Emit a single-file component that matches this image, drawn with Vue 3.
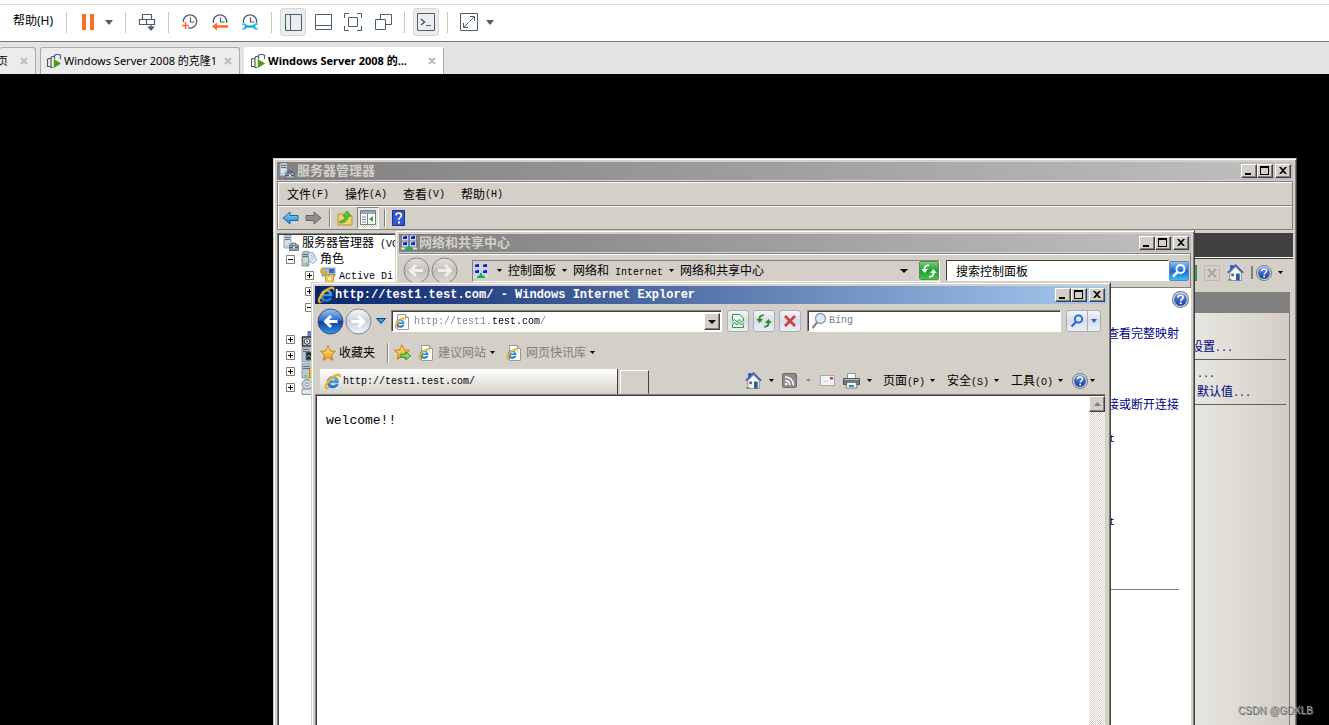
<script setup>
import { ref } from 'vue'

const address = ref('http://test1.test.com/')
const query = ref('')
const panelQuery = ref('搜索控制面板')

const managerMenus = [
  { text: '文件', key: '(F)' },
  { text: '操作', key: '(A)' },
  { text: '查看', key: '(V)' },
  { text: '帮助', key: '(H)' }
]

const pageMenus = [
  { text: '页面', key: '(P)' },
  { text: '安全', key: '(S)' },
  { text: '工具', key: '(O)' }
]

const tree = [
  { level: 0, icon: 'i-server', text: '服务器管理器', latin: ' (VC' },
  { level: 1, box: '-', icon: 'i-roles', text: '角色' },
  { level: 2, box: '+', icon: 'i-ad', latin: 'Active Di' },
  { level: 2, box: '+' },
  { level: 2, box: '-' },
  { level: 2 },
  { level: 1, box: '+', icon: 'i-feature' },
  { level: 1, box: '+', icon: 'i-diag' },
  { level: 1, box: '+', icon: 'i-config' },
  { level: 1, box: '+', icon: 'i-disk' }
]
</script>

<template>
  <div class="page">
    <svg class="defs" width="0" height="0" aria-hidden="true">
      <defs>
        <linearGradient id="gBlue" x1="0" y1="0" x2="0" y2="1">
          <stop offset="0" stop-color="#9cc4ee" /><stop offset=".45" stop-color="#2f6fd0" /><stop offset=".5" stop-color="#0a3f9c" /><stop offset="1" stop-color="#2f9af0" />
        </linearGradient>
        <linearGradient id="gPale" x1="0" y1="0" x2="0" y2="1">
          <stop offset="0" stop-color="#f6f8fb" /><stop offset=".5" stop-color="#c9d0da" /><stop offset="1" stop-color="#f4f7fb" />
        </linearGradient>
        <linearGradient id="gGray" x1="0" y1="0" x2="0" y2="1">
          <stop offset="0" stop-color="#e4e2de" /><stop offset=".5" stop-color="#c2c0bb" /><stop offset="1" stop-color="#dddbd6" />
        </linearGradient>
        <linearGradient id="gGold" x1="0" y1="0" x2="0" y2="1">
          <stop offset="0" stop-color="#ffe98a" /><stop offset="1" stop-color="#f59a10" />
        </linearGradient>
        <linearGradient id="gArrow" x1="0" y1="0" x2="0" y2="1">
          <stop offset="0" stop-color="#8ed4fb" /><stop offset="1" stop-color="#1488d8" />
        </linearGradient>
        <linearGradient id="gHelp" x1="0" y1="0" x2="0" y2="1">
          <stop offset="0" stop-color="#6f95e6" /><stop offset="1" stop-color="#123a9e" />
        </linearGradient>
        <linearGradient id="gIe" x1="0" y1="0" x2="0" y2="1">
          <stop offset="0" stop-color="#5cc0f8" /><stop offset="1" stop-color="#1573d0" />
        </linearGradient>
      </defs>
      <symbol id="i-ie" viewBox="0 0 16 16">
        <path d="M13.6 9.2H5.6c.2 1.700 1.300 2.600 2.900 2.600 1.200 0 2-.5 2.500-1.300h2.400c-.7 2.300-2.600 3.600-5 3.600-3.300 0-5.500-2.300-5.500-5.500S5.200 3.100 8.400 3.100c3.300 0 5.400 2.500 5.200 6.100zM5.700 7.200h5.200C10.700 5.900 9.700 5.100 8.300 5.100S6 5.900 5.700 7.200z" fill="url(#gIe)" stroke="#1460b0" stroke-width=".4" />
        <path d="M1.500 14.800C-.6 12.600 3 6.200 7.600 3 11 .6 14.500 0 15.300 1.600c.4.800.1 2-.5 3.200.1-1.600-.4-2.400-1.600-2.300-2 .1-5.300 2.200-7.700 5.300C3 11 1.900 13.600 3.200 14.100c.7.200 1.700-.1 2.700-.7-1.700 1.500-3.500 2.300-4.400 1.400z" fill="#fbb916" stroke="#c98508" stroke-width=".3" />
      </symbol>
      <symbol id="i-page" viewBox="0 0 16 16">
        <path d="M3.500.5h8l3 3v12h-11z" fill="#fff" stroke="#9a9a9a" />
        <path d="M11.500.5v3h3" fill="#e4e4e4" stroke="#9a9a9a" />
        <use href="#i-ie" x="0" y="3" width="12" height="12" />
      </symbol>
      <symbol id="i-star" viewBox="0 0 16 16">
        <path d="M8 .8l2.200 5 5.300.6-4 3.600 1.200 5.300L8 12.600l-4.700 2.700L4.500 10 .5 6.400l5.300-.6z" fill="url(#gGold)" stroke="#b97812" stroke-width=".9" stroke-linejoin="round" />
      </symbol>
      <symbol id="i-staradd" viewBox="0 0 16 16">
        <use href="#i-star" width="15" height="15" />
        <path d="M6.500 9.500h4.500V7.200L15.700 11 11 14.800v-2.300H6.500z" fill="#7fe35c" stroke="#2a8a1c" stroke-width=".9" />
      </symbol>
      <symbol id="i-help" viewBox="0 0 16 16">
        <circle cx="8" cy="8" r="7.500" fill="#dcdce2" stroke="#73777f" />
        <circle cx="8" cy="8" r="6" fill="url(#gHelp)" />
        <path d="M5.600 6.300C5.600 4.600 6.700 4 8 4s2.500.7 2.500 2.100C10.500 7.600 8.200 7.900 8.200 9.600" fill="none" stroke="#fff" stroke-width="1.500" />
        <rect x="7.300" y="10.700" width="1.800" height="1.700" fill="#fff" />
      </symbol>
      <symbol id="i-home" viewBox="0 0 16 16">
        <path d="M3 1h3v4H3z" fill="#2a4fd0" />
        <path d="M2.500 8L8 2.500 13.500 8v7.500h-11z" fill="#f4f6fa" stroke="#8c98ac" />
        <path d="M.7 8.200L8 1l7.300 7.200" fill="none" stroke="#3e5fae" stroke-width="1.500" />
        <path d="M8.500 9h3.500v6.500H8.500z" fill="#2d5c9c" />
        <path d="M4 9h2.500v2.500H4z" fill="#5b6472" />
        <path d="M1 14.500c2-1 3-.5 4 1H1z" fill="#66a34a" />
      </symbol>
      <symbol id="i-net" viewBox="0 0 16 16">
        <path d="M1 .5h6v5H1zM9 .5h6v5H9zM1 6.500h6v5H1zM9 6.500h6v5H9z" fill="#c9d6f4" />
        <path d="M2 1h4v3H2zM10 1h4v3h-4zM2 7h4v3H2zM10 7h4v3h-4z" fill="#1622c0" />
        <path d="M2 1h2v1H2zM10 1h2v1h-2zM2 7h2v1H2zM10 7h2v1h-2z" fill="#5f7cf0" />
        <path d="M0 13.500h4.500M11.500 13.500H16" stroke="#cdeadb" stroke-width="2" />
        <path d="M7 10h2v2l3 1.500V15H4v-1.500L7 12z" fill="#18b060" />
      </symbol>
      <symbol id="i-server" viewBox="0 0 16 16">
        <path d="M1 1l1.500-1H8v13H1z" fill="#c9d5de" stroke="#8d9ba6" stroke-width=".8" />
        <path d="M2 2.500h5M2 4.500h5" stroke="#60727f" />
        <path d="M2 6.500h5M2 8.500h3" stroke="#eef3f6" />
        <path d="M6.500 10h9v5.500h-9z" fill="#8fa1b0" stroke="#5a6b79" stroke-width=".8" />
        <path d="M9 10V8.200h4V10M6.500 12.500h9" fill="none" stroke="#4d5e6b" />
        <path d="M10 12h2v1.500h-2z" fill="#e8edf0" />
      </symbol>
      <symbol id="i-roles" viewBox="0 0 16 16">
        <path d="M1 2l1.500-1.500H8V15H1z" fill="#b6c4d0" stroke="#7c8b97" stroke-width=".8" />
        <path d="M2 3.500h5M2 5.500h5" stroke="#5a6c7a" />
        <path d="M2 8h5M2 10h5" stroke="#e2eaf0" />
        <path d="M5 13.500h2" stroke="#52d93c" stroke-width="2" />
        <path d="M7 3l4-2 1.500 1.200L15.700 9 12 12.500 8 10z" fill="#e2effa" stroke="#6a93b4" stroke-width=".8" />
        <path d="M9 5l3-1.500M9.500 7L13 5M10 9l3.500-2" stroke="#8db4d4" stroke-width=".8" />
      </symbol>
      <symbol id="i-ad" viewBox="0 0 16 16">
        <path d="M2 1h13v8H2z" fill="#9fc1ee" stroke="#6c86ae" stroke-width=".8" />
        <path d="M9 2h5v4H9z" fill="#3c66c6" />
        <path d="M5 7.500h9L13 16H6z" fill="#ecc956" stroke="#b3851a" stroke-width=".8" />
        <circle cx="3.500" cy="4" r="2.500" fill="none" stroke="#d9a526" stroke-width="1.500" />
        <path d="M5 5.500l4 3.500" stroke="#d9a526" stroke-width="1.500" />
        <path d="M8 10h3v3H8z" fill="#fff2b8" />
      </symbol>
      <symbol id="i-feature" viewBox="0 0 16 16">
        <path d="M7 0h9v9H7z" fill="#6f80c8" stroke="#687886" />
        <path d="M1.500 6h9v9h-9z" fill="#c9ced2" stroke="#2c3136" stroke-width="1.500" />
        <circle cx="6" cy="10.500" r="2.800" fill="#fff" stroke="#2c3136" /><circle cx="6" cy="10.500" r="1" fill="#2c3136" />
      </symbol>
      <symbol id="i-diag" viewBox="0 0 16 16">
        <path d="M1 0h8v15H1z" fill="#b7c7d4" stroke="#8d9ba6" />
        <path d="M2 2.500h6M2 4.500h6" stroke="#5a6c7a" />
        <path d="M5 5h10v8H5z" fill="#22282c" stroke="#69757d" />
        <path d="M6 10l2-2 2 3 2-4" fill="none" stroke="#4edc4e" />
      </symbol>
      <symbol id="i-config" viewBox="0 0 16 16">
        <path d="M1 0h8v15H1z" fill="#b7c7d4" stroke="#8d9ba6" />
        <path d="M2 3.500h6M2 5.500h6" stroke="#5a6c7a" />
        <path d="M3 13h3" stroke="#52d93c" stroke-width="1.500" />
        <path d="M8.500 5h6v10h-6z" fill="#f8c23c" stroke="#b7811a" />
      </symbol>
      <symbol id="i-disk" viewBox="0 0 16 16">
        <circle cx="6" cy="5.500" r="5" fill="#cbd2d8" stroke="#7a858e" />
        <circle cx="6" cy="5.500" r="1.500" fill="#fff" stroke="#8792a0" />
        <path d="M1 10h14v5.500H1z" fill="#e1e4e8" stroke="#84909a" />
      </symbol>
      <symbol id="i-vm" viewBox="0 0 16 16">
        <path d="M5 13.500H1.500v-7l1-1h2M7.500 14.500H5v-10l1-1h2M8.500 9.500V2.500l1-1h4l1 1V6" fill="none" stroke="#4a5f70" stroke-width="1.200" />
        <path d="M7.500 5.500l8 5-8 5z" fill="#4c9a10" stroke="#fff" stroke-width=".5" />
      </symbol>
      <symbol id="i-clock" viewBox="0 0 18 18">
        <circle cx="9" cy="8.500" r="6.700" fill="none" stroke="#4a6274" stroke-width="1.300" />
        <path d="M9.500 4.500V9h4" fill="none" stroke="#4a6274" stroke-width="1.200" />
      </symbol>
      <symbol id="i-min" viewBox="0 0 12 10"><path d="M2 7h6v2H2z" /></symbol>
      <symbol id="i-max" viewBox="0 0 12 10"><path d="M1 0h9v9H1zM2 2v6h7V2z" fill-rule="evenodd" /></symbol>
      <symbol id="i-close" viewBox="0 0 12 10"><path d="M2 1h2l2 2 2-2h2L7 4.500 10 8H8L6 6 4 8H2l3-3.500z" /></symbol>
      <symbol id="i-sync" viewBox="0 0 16 16">
        <path d="M8 3C5.500 3 4.500 4 4.500 6H7L3.600 10 .3 6h2.200C2.500 2.800 5 1.200 8 1.600zM8 13c2.500 0 3.500-1 3.500-3H9l3.400-4 3.300 4h-2.200c0 3.200-2.500 4.800-5.500 4.400z" />
      </symbol>
    </svg>

    <header>
      <div class="strip"></div>
      <div class="toolbar">
        <button class="help">帮助(H)</button>
        <i class="sep"></i>
        <button class="tool" aria-label="pause"><svg width="14" height="16"><path d="M1 0h4v16H1zM9 0h4v16H9z" fill="#ff6a1f" /></svg></button>
        <button class="drop" aria-label="power options"><svg width="8" height="5"><path d="M0 0h8L4 5z" fill="#4a5f70" /></svg></button>
        <i class="sep wide"></i>
        <button class="tool" aria-label="send keys"><svg width="18" height="18" fill="none" stroke="#4a5f70" stroke-width="1.200"><path d="M4.500 1.500h9v5h-9zM1.500 6.500h7v5h-7zM8.500 6.500h8v5h-8zM13 12v4" /><path d="M10.500 14h5L13 17z" fill="#4a5f70" /></svg></button>
        <i class="sep"></i>
        <button class="tool" aria-label="take snapshot"><svg width="18" height="18"><use href="#i-clock" width="18" height="18" /><path d="M0 9h7v8H0z" fill="#fff" /><path d="M1 12.500h7M4.500 9v7" stroke="#ff6a1f" stroke-width="1.500" /></svg></button>
        <button class="tool" aria-label="revert snapshot"><svg width="18" height="18"><use href="#i-clock" width="18" height="18" /><path d="M0 10h18v8H0z" fill="#fff" /><path d="M1 13.500l5-4v2.700h11v2.600H6v2.700z" fill="#ff6a1f" /></svg></button>
        <button class="tool" aria-label="manage snapshots"><svg width="18" height="18"><use href="#i-clock" width="18" height="18" /><path d="M0 10h18v8H0z" fill="#fff" /><path d="M1 10.500h3l2 1.700h6l2-1.700h3v1.200h-2.500v3.600H17v1.200h-3l-2-1.700H6l-2 1.700H1v-1.200h2.500v-3.600H1z" fill="#12b2dc" /></svg></button>
        <i class="sep"></i>
        <button class="tool on" aria-label="library"><svg class="line" width="17" height="17"><path d="M.5.500h16v16H.5zM5.500.500v16" /></svg></button>
        <button class="tool" aria-label="thumbnails"><svg class="line" width="17" height="17"><path d="M.5.500h16v15H.5zM.5 11.500h16" /></svg></button>
        <button class="tool" aria-label="full screen"><svg class="line" width="18" height="18"><path d="M.5 5V.5H5M13 .5h4.500V5M17.500 13v4.500H13M5 17.500H.5V13M4.500 4.500h9v9h-9z" /></svg></button>
        <button class="tool" aria-label="unity"><svg class="line" width="17" height="17"><path d="M.5 5.500h10v10H.5zM5.500 5V.5h11v10H11" /></svg></button>
        <i class="sep"></i>
        <button class="tool on" aria-label="console"><svg width="18" height="18" fill="none" stroke="#4a5f70"><path d="M.5.500h17v17H.5z" /><path d="M4 6l3.500 3L4 12" stroke-width="1.600" /><path d="M9 12.500h5" /></svg></button>
        <i class="sep"></i>
        <button class="tool" aria-label="stretch"><svg width="18" height="18" fill="none" stroke="#4a5f70"><path d="M.5.500h17v17H.5zM10 3.500h4.500V8M8 14.500H3.500V10M14 4l-4.500 4.500M4 14l4.500-4.500" /></svg></button>
        <button class="drop" aria-label="stretch options"><svg width="8" height="5"><path d="M0 0h8L4 5z" fill="#4a5f70" /></svg></button>
      </div>
      <nav class="tabs">
        <div class="tab first"><span>页</span><button aria-label="close"><svg width="8" height="8"><path d="M1 1l6 6M7 1L1 7" /></svg></button></div>
        <div class="tab"><svg width="16" height="16"><use href="#i-vm" /></svg><span>Windows Server 2008 的克隆1</span><button aria-label="close"><svg width="8" height="8"><path d="M1 1l6 6M7 1L1 7" /></svg></button></div>
        <div class="tab current"><svg width="16" height="16"><use href="#i-vm" /></svg><span>Windows Server 2008 的...</span><button aria-label="close"><svg width="8" height="8"><path d="M1 1l6 6M7 1L1 7" /></svg></button></div>
      </nav>
    </header>

    <main class="desktop">
      <section class="win manager">
        <div class="title inactive">
          <svg width="16" height="16"><use href="#i-server" /></svg><h2>服务器管理器</h2>
          <div class="controls">
            <button aria-label="minimize"><svg width="12" height="10"><use href="#i-min" /></svg></button>
            <button aria-label="maximize"><svg width="12" height="10"><use href="#i-max" /></svg></button>
            <button aria-label="close"><svg width="12" height="10"><use href="#i-close" /></svg></button>
          </div>
        </div>
        <div class="band menus">
          <button v-for="m in managerMenus" :key="m.text">{{ m.text }}<span class="lat">{{ m.key }}</span></button>
        </div>
        <div class="band tools">
          <button aria-label="back"><svg width="17" height="14"><path d="M1 7l7-6v3.500h8v5H8V13z" fill="url(#gArrow)" stroke="#1b6aa6" /></svg></button>
          <button aria-label="forward"><svg width="17" height="14"><path d="M16 7L9 1v3.500H1v5h8V13z" fill="#8f8f8f" stroke="#666" /></svg></button>
          <i></i>
          <button aria-label="up"><svg width="16" height="16"><path d="M1 4h5l1 2h8v9H1z" fill="#f3cf6d" stroke="#bb9234" /><path d="M3 11c3 0 5-2 5-5H6l4-5 4 5h-3c0 5-4 7-8 7z" fill="#4fce34" stroke="#2b8c1c" stroke-width=".7" /></svg></button>
          <button class="pressed" aria-label="show tree"><svg width="16" height="15"><path d="M.5.500h15v14H.5z" fill="#fff" stroke="#77808a" /><path d="M1 1h14v3H1z" fill="#9aa6b3" /><path d="M7.500 4v10M2 7h4M2 9.500h4M2 12h4" stroke="#77808a" /><path d="M13 6v6L9 9z" fill="#32b13a" /></svg></button>
          <i></i>
          <button aria-label="help"><svg width="13" height="16"><path d="M.5.500h12v15H.5z" fill="#3459c8" stroke="#1d3588" /><path d="M4 5.500C4 3.500 5 3 6.600 3S9.300 4 9.300 5.500C9.300 7.500 6.800 7.500 6.800 10" fill="none" stroke="#fff" stroke-width="1.600" /><path d="M6 11.500h2v2H6z" fill="#fff" /></svg></button>
        </div>
        <div class="manager-body">
          <ul class="tree">
            <li v-for="(n, i) in tree" :key="i" :class="'lv' + n.level">
              <svg v-if="n.box" class="box" width="9" height="9"><path class="frame" d="M.5.500h8v8h-8z" /><path d="M2 4.500h5" /><path v-if="n.box === '+'" d="M4.500 2v5" /></svg>
              <svg v-if="n.icon" width="16" height="16"><use :href="'#' + n.icon" /></svg>
              <span v-if="n.text || n.latin">{{ n.text }}<span v-if="n.latin" class="lat">{{ n.latin }}</span></span>
            </li>
          </ul>
          <div class="detail">
            <div class="detail-head"></div>
            <div class="detail-tools">
              <button class="go" aria-label="refresh"></button>
              <button class="stop" aria-label="stop"><svg width="10" height="10"><path d="M1 1l8 8M9 1L1 9" stroke="#a6a5a1" stroke-width="2" /></svg></button>
              <button aria-label="home"><svg width="17" height="17"><use href="#i-home" /></svg></button>
              <i></i>
              <button aria-label="help"><svg width="16" height="16"><use href="#i-help" /></svg></button>
              <svg width="5" height="3"><path d="M0 0h5L2.500 3z" /></svg>
            </div>
            <div class="detail-bar"></div>
            <div class="detail-panel">
              <div class="links">
                <div class="group"><a href="#">设置<span class="lat">...</span></a></div>
                <div class="group pair">
                  <a href="#"><span class="lat">...</span></a>
                  <a href="#">默认值<span class="lat">...</span></a>
                </div>
              </div>
            </div>
          </div>
        </div>
      </section>

      <section class="win network">
        <div class="title inactive">
          <svg width="16" height="16"><use href="#i-net" /></svg><h2>网络和共享中心</h2>
          <div class="controls">
            <button aria-label="minimize"><svg width="12" height="10"><use href="#i-min" /></svg></button>
            <button aria-label="maximize"><svg width="12" height="10"><use href="#i-max" /></svg></button>
            <button aria-label="close"><svg width="12" height="10"><use href="#i-close" /></svg></button>
          </div>
        </div>
        <div class="net-nav">
          <div class="rounds">
            <button aria-label="back"><svg width="27" height="27"><circle cx="13.500" cy="13.500" r="12.500" fill="url(#gGray)" stroke="#85837e" /><path d="M20 13.500H8M13 8l-5.500 5.500L13 19" fill="none" stroke="#efeeeb" stroke-width="3" /></svg></button>
            <button aria-label="forward"><svg width="27" height="27"><circle cx="13.500" cy="13.500" r="12.500" fill="url(#gGray)" stroke="#85837e" /><path d="M7 13.500h12M14 8l5.500 5.500L14 19" fill="none" stroke="#efeeeb" stroke-width="3" /></svg></button>
          </div>
          <div class="crumbs">
            <svg width="16" height="16"><use href="#i-net" /></svg>
            <svg class="c" width="5" height="3"><path d="M0 0h5L2.500 3z" /></svg>
            <a href="#">控制面板</a>
            <svg class="c" width="5" height="3"><path d="M0 0h5L2.500 3z" /></svg>
            <a href="#">网络和<span class="lat"> Internet</span></a>
            <svg class="c" width="5" height="3"><path d="M0 0h5L2.500 3z" /></svg>
            <a href="#">网络和共享中心</a>
            <svg class="end" width="8" height="4"><path d="M0 0h8L4 4z" /></svg>
            <button class="refresh" aria-label="refresh"><svg width="16" height="16" fill="#fff"><use href="#i-sync" /></svg></button>
          </div>
          <input v-model="panelQuery" aria-label="搜索控制面板" />
          <button class="find" aria-label="search"><svg width="16" height="16"><circle cx="9.500" cy="6" r="4" fill="none" stroke="#fff" stroke-width="2" /><path d="M6.500 9L2 13.500" stroke="#fff" stroke-width="2.500" /></svg></button>
        </div>
        <div class="net-body">
          <svg class="hp" width="17" height="17"><use href="#i-help" /></svg>
          <a href="#" class="map">查看完整映射</a>
          <a href="#" class="conn">接或断开连接</a>
          <span class="lat t1">t</span>
          <span class="lat t2">t</span>
          <hr />
        </div>
      </section>

      <section class="win ie">
        <div class="title">
          <svg width="18" height="18"><use href="#i-ie" /></svg><h2 class="latin-title">http://test1.test.com/ - Windows Internet Explorer</h2>
          <div class="controls">
            <button aria-label="minimize"><svg width="12" height="10"><use href="#i-min" /></svg></button>
            <button aria-label="maximize"><svg width="12" height="10"><use href="#i-max" /></svg></button>
            <button aria-label="close"><svg width="12" height="10"><use href="#i-close" /></svg></button>
          </div>
        </div>
        <div class="ie-nav">
          <div class="rounds">
            <button aria-label="back"><svg width="27" height="27"><circle cx="13.500" cy="13.500" r="12.500" fill="url(#gBlue)" stroke="#44536b" /><path d="M20.500 13.500H9M14 8l-5.500 5.500L14 19" fill="none" stroke="#fff" stroke-width="3" /></svg></button>
            <button aria-label="forward"><svg width="27" height="27"><circle cx="13.500" cy="13.500" r="12.500" fill="url(#gPale)" stroke="#7e8794" /><path d="M6.500 13.500H18M13 8l5.500 5.500L13 19" fill="none" stroke="#fff" stroke-width="3" /></svg></button>
          </div>
          <button class="recent" aria-label="recent pages"><svg width="10" height="6"><path d="M.5.500h9L5 5.500z" fill="#2b9cdc" stroke="#123e72" /></svg></button>
          <div class="field address">
            <svg width="16" height="16"><use href="#i-page" /></svg>
            <input v-model="address" aria-label="address" />
            <button aria-label="show addresses"><svg width="8" height="4"><path d="M0 0h8L4 4z" /></svg></button>
          </div>
          <button class="sq" aria-label="compatibility view"><svg width="14" height="16" fill="none" stroke="#2f9a3c"><path d="M1.500 7V1.500h7l4 3.500v3M1.500 12v2.500h11V12" fill="#eefaee" /><path d="M1 8.500l2.500-2L6 9l2-2.500 2.500 2.500L13 7M1 11.500l2.500-2L6 12l2-2.500 2.500 2.500L13 10" /></svg></button>
          <button class="sq" aria-label="refresh"><svg width="16" height="16" fill="#1d9426"><use href="#i-sync" /></svg></button>
          <button class="sq" aria-label="stop"><svg width="14" height="14"><path d="M2 2l10 10M12 2L2 12" stroke="#cf3a3c" stroke-width="2.600" /></svg></button>
          <div class="field bing">
            <svg width="16" height="18"><circle cx="9.500" cy="6.500" r="5" fill="#d9eefb" stroke="#8d99a6" stroke-width="1.300" /><path d="M6 10.500L1.500 16" stroke="#7c7f84" stroke-width="2" /></svg>
            <input v-model="query" placeholder="Bing" aria-label="search" />
          </div>
          <div class="split">
            <button aria-label="search"><svg width="14" height="14"><circle cx="8.500" cy="5" r="3.700" fill="none" stroke="#1769e0" stroke-width="1.800" /><path d="M6 8L1.500 12.500" stroke="#1769e0" stroke-width="2.200" /></svg></button>
            <button aria-label="search options"><svg width="6" height="4"><path d="M0 0h6L3 4z" fill="#1769e0" /></svg></button>
          </div>
        </div>
        <div class="favs">
          <button class="favbtn"><svg width="16" height="16"><use href="#i-star" /></svg>收藏夹</button>
          <i></i>
          <button aria-label="add favourite"><svg width="17" height="17"><use href="#i-staradd" /></svg></button>
          <button class="site"><svg width="16" height="16"><use href="#i-page" /></svg>建议网站<svg width="5" height="3"><path d="M0 0h5L2.500 3z" /></svg></button>
          <button class="site"><svg width="16" height="16"><use href="#i-page" /></svg>网页快讯库<svg width="5" height="3"><path d="M0 0h5L2.500 3z" /></svg></button>
        </div>
        <div class="ie-tabs">
          <button class="ie-tab"><svg width="17" height="17"><use href="#i-ie" /></svg><span class="lat">http://test1.test.com/</span></button>
          <button class="new-tab" aria-label="new tab"></button>
          <div class="commands">
            <button class="home" aria-label="home"><svg width="17" height="17"><use href="#i-home" /></svg><svg width="5" height="3"><path d="M0 0h5L2.500 3z" /></svg></button>
            <button class="feeds" aria-label="feeds"><svg width="15" height="15"><rect x=".5" y=".5" width="14" height="14" rx="1.500" fill="#8c8c8c" stroke="#6b6b6b" /><circle cx="4.200" cy="11" r="1.300" fill="#fff" /><path d="M3 7.500c3 0 4.800 1.800 4.800 4.800M3 4c5 0 8.300 3.300 8.300 8.300" fill="none" stroke="#fff" stroke-width="1.500" /></svg><svg width="5" height="3"><path d="M0 0h5L2.500 3z" fill="#8a8a8a" /></svg></button>
            <button class="mail" aria-label="mail"><svg width="15" height="11"><path d="M.5.500h14v10H.5z" fill="#f4f4f4" stroke="#a8a8a8" /><path d="M10 2h3v2.500h-3z" fill="#d83434" /><path d="M3 6.500h5" stroke="#d2d2d2" /></svg></button>
            <button class="print" aria-label="print"><svg width="17" height="16"><path d="M4.500.500h8v5h-8z" fill="#fff" stroke="#8f9499" /><path d="M.5 5.500h16v6H.5z" fill="#6d747c" stroke="#4c5258" /><path d="M1 6.500h15" stroke="#b8bec4" /><path d="M4 9.500h9l1 5.500H3z" fill="#f4f8fc" stroke="#7e868e" /><path d="M6 12h3v2H6z" fill="#2e76c8" /><path d="M9 12h2v2H9z" fill="#3fa447" /></svg><svg width="5" height="3"><path d="M0 0h5L2.500 3z" /></svg></button>
            <button v-for="m in pageMenus" :key="m.text" class="word"><span>{{ m.text }}<span class="lat">{{ m.key }}</span></span><svg width="5" height="3"><path d="M0 0h5L2.500 3z" /></svg></button>
            <button class="helpbtn" aria-label="help"><svg width="16" height="16"><use href="#i-help" /></svg><svg width="5" height="3"><path d="M0 0h5L2.500 3z" /></svg></button>
          </div>
        </div>
        <div class="view">
          <p>welcome!!</p>
          <div class="scroll"><button aria-label="scroll up"><svg width="7" height="4"><path d="M0 4h7L3.500 0z" fill="#808080" /></svg></button></div>
        </div>
      </section>
      <p class="mark">CSDN @GDXLB</p>
    </main>
  </div>
</template>

<style>
body {
  background: #000;
}
</style>

<style scoped>
.page {
  height: 100vh;
  display: flex;
  flex-direction: column;
  overflow: hidden;
  font: 12px/16px "Liberation Sans", "Noto Sans CJK SC", sans-serif;
  color: #000;
}
.page * {
  box-sizing: border-box;
}
.defs {
  position: absolute;
}
svg {
  display: block;
  flex: none;
}
button {
  border: 0;
  padding: 0;
  margin: 0;
  background: none;
  color: inherit;
  font: inherit;
  flex: none;
  display: flex;
  align-items: center;
  justify-content: center;
}
input {
  border: 0;
  padding: 0;
  margin: 0;
  outline: 0;
  font: inherit;
  color: inherit;
  min-width: 0;
}
a {
  color: inherit;
  text-decoration: none;
}
h2,
p,
ul {
  margin: 0;
  padding: 0;
}
.lat {
  font: 10px/10px "Liberation Mono", monospace;
  white-space: pre;
}

/* host toolbar */
.strip {
  height: 5px;
  background: #fff;
  border-bottom: 1px solid #dedede;
}
.toolbar {
  height: 37px;
  padding: 0 0 2px 6px;
  background: #fff;
  border-bottom: 1px solid #777;
  display: flex;
  align-items: center;
}
.help {
  width: 54px;
  height: 26px;
  padding-bottom: 2px;
  font-family: "Noto Sans", "Noto Sans CJK SC", sans-serif;
  font-size: 12px;
}
.sep {
  width: 1px;
  height: 21px;
  margin: 0 6px;
  background: #c8c8c8;
}
.sep.wide {
  margin-left: 10px;
}
.tool {
  width: 26px;
  height: 28px;
  margin: 0 2px;
}
.tool.on {
  background: #ecedee;
  border: 1px solid #d6d6d6;
  border-radius: 3px;
}
.drop {
  width: 12px;
  height: 28px;
}
.line {
  fill: none;
  stroke: #4a5f70;
}
.tabs {
  height: 32px;
  padding-top: 5px;
  background: #e3e4e6;
  display: flex;
  gap: 4px;
  font: 11px/16px "Noto Sans", "Noto Sans CJK SC", sans-serif;
}
.tab {
  width: 200px;
  padding: 0 7px 0 5px;
  background: #ececed;
  border: 1px solid #a9a9a9;
  border-bottom: 0;
  border-radius: 3px 3px 0 0;
  display: flex;
  align-items: center;
  gap: 2px;
  white-space: nowrap;
}
.tab.first {
  width: 36px;
  padding-left: 0;
  border-left: 0;
  overflow: hidden;
}
.tab.first span {
  margin-left: -3px;
}
.tab button {
  margin-left: auto;
}
.tab button path {
  stroke: #bcbcbc;
  stroke-width: 2;
}
.tab.current {
  background: #fff;
  border-color: #fff #a9a9a9 #fff #fff;
  font-weight: bold;
}

/* guest desktop */
.desktop {
  flex: 1;
  position: relative;
  overflow: hidden;
  background: #000;
}
.win {
  position: absolute;
  bottom: -4px;
  padding: 3px;
  display: flex;
  flex-direction: column;
  background: #d4d0c8;
  border: 1px solid;
  border-color: #d4d0c8 #404040 #404040 #d4d0c8;
  box-shadow: inset 1px 1px #fff, inset -1px 0 #808080;
}
.manager {
  left: 273px;
  top: 84px;
  width: 1024px;
}
.network {
  left: 395px;
  top: 156px;
  width: 800px;
}
.ie {
  left: 311px;
  top: 208px;
  width: 800px;
}
.title {
  height: 18px;
  flex: none;
  padding: 0 2px;
  display: flex;
  align-items: center;
  gap: 2px;
  color: #fff;
  background: linear-gradient(90deg, #0a246a, #a6caf0);
}
.title.inactive {
  color: #d4d0c8;
  background: linear-gradient(90deg, #808080, #c0c0c0);
}
h2 {
  font-size: 13px;
  line-height: 18px;
  font-weight: bold;
}
.ie > .title {
  gap: 0;
}
.latin-title {
  font: bold 12px/18px "Liberation Mono", monospace;
}
.controls {
  margin-left: auto;
  display: flex;
}
.controls button {
  width: 16px;
  height: 14px;
  background: #d4d0c8;
  border: 1px solid;
  border-color: #fff #404040 #404040 #fff;
  box-shadow: inset -1px -1px #808080;
}
.controls button:last-child {
  margin-left: 2px;
}

/* server manager */
.band {
  height: 24px;
  flex: none;
  display: flex;
  align-items: center;
  border: 1px solid #808080;
  border-bottom: 0;
  box-shadow: inset 1px 1px #fff;
}
.menus {
  margin-top: 1px;
  padding: 2px 0 0 9px;
  gap: 16px;
}
.tools {
  height: 25px;
  border-bottom: 1px solid #808080;
  padding-left: 4px;
}
.tools button {
  margin-right: 6px;
}
.tools i {
  width: 2px;
  height: 18px;
  margin: 0 6px 0 1px;
  border-left: 1px solid #808080;
  border-right: 1px solid #fff;
}
.tools .pressed {
  width: 22px;
  height: 22px;
  margin-left: -2px;
  margin-right: 4px;
  background: repeating-conic-gradient(#fff 0 25%, #d4d0c8 0 50%) 0 0 / 2px 2px;
  border: 1px solid;
  border-color: #808080 #fff #fff #808080;
}
.manager-body {
  flex: 1;
  margin-top: 3px;
  display: flex;
  min-height: 0;
}
.tree {
  width: 240px;
  background: #fff;
  list-style: none;
  border-left: 1px solid #808080;
  border-top: 1px solid #808080;
  box-shadow: inset 1px 1px #404040;
  padding: 1px 0 0 5px;
}
.tree li {
  height: 16px;
  display: flex;
  align-items: center;
  gap: 3px;
  white-space: nowrap;
}
.tree .box {
  margin-right: 3px;
  fill: none;
  stroke: #000;
}
.tree .frame {
  stroke: #808080;
}
.tree .lv1 {
  padding-left: 3px;
}
.tree .lv2 {
  padding-left: 22px;
}
.detail {
  flex: 1;
  display: flex;
  flex-direction: column;
}
.detail-head {
  height: 25px;
  background: #404040;
  border-bottom: 1px solid #fff;
}
.detail-tools {
  height: 34px;
  padding: 0 10px 6px 0;
  border-top: 1px solid #404040;
  display: flex;
  align-items: center;
  justify-content: flex-end;
}
.detail-tools .go {
  width: 16px;
  height: 16px;
  margin-right: 7px;
  background: #22b13a;
  border: 1px solid #4d7f55;
}
.detail-tools .stop {
  width: 16px;
  height: 16px;
  margin-right: 7px;
  border: 1px solid #bdbbb6;
  border-radius: 2px;
}
.detail-tools i {
  width: 2px;
  height: 13px;
  margin: 0 3px 0 7px;
  background: #808080;
}
.detail-tools > svg {
  margin-left: 6px;
}
.detail-bar {
  height: 21px;
  margin-right: 3px;
  background: #808080;
}
.detail-panel {
  flex: 1;
  margin-right: 3px;
  padding: 26px 3px 0 0;
  border-right: 1px solid #808080;
  background: linear-gradient(270deg, #d4ccc6, #d8d4ca 20px, #e6e6e0 92px);
}
.links {
  width: 100px;
  margin-left: auto;
  color: #000080;
}
.group {
  padding: 0 0 4px 5px;
  border-bottom: 1px solid #606060;
  display: flex;
  flex-direction: column;
}
.pair {
  padding: 5px 0 4px 11px;
  gap: 3px;
}
.pair a {
  height: 16px;
}

/* network centre */
.rounds {
  display: flex;
  gap: 1px;
}
.net-nav {
  height: 35px;
  flex: none;
  margin-top: 1px;
  padding: 0 1px 0 4px;
  display: flex;
  align-items: center;
  border: 1px solid #808080;
  border-left: 0;
  box-shadow: inset 0 1px #fff;
}
.crumbs {
  flex: 1;
  height: 22px;
  margin: 0 6px 0 14px;
  border: 1px solid;
  border-color: #808080 #fff #fff #808080;
  display: flex;
  align-items: center;
  white-space: nowrap;
}
.crumbs .c {
  margin: 0 6px;
}
.crumbs > svg:first-child + .c {
  margin-left: 8px;
}
.crumbs .end {
  margin: 0 11px 0 auto;
}
.refresh {
  width: 20px;
  height: 19px;
  background: linear-gradient(#7cce7c, #1e9e2a 50%, #3fc83f);
  border: 1px solid #5a8a5a;
  border-radius: 2px;
}
.net-nav input {
  width: 223px;
  height: 21px;
  padding-left: 9px;
  background: #fff;
  border: 1px solid;
  border-color: #404040 #fff #fff #404040;
}
.find {
  width: 20px;
  height: 20px;
  border: 1px solid #5d86b8;
  border-radius: 2px;
  background: linear-gradient(#8cc0ee, #1d67cf 50%, #38c4f4);
}
.net-body {
  flex: 1;
  background: #fff;
  padding: 3px 12px 0 0;
  display: flex;
  flex-direction: column;
  align-items: flex-end;
  color: #000080;
}
.hp {
  margin: 0 -10px 18px 0;
}
.map {
  margin-bottom: 55px;
}
.conn {
  margin-bottom: 22px;
}
.t1,
.t2 {
  margin-right: 64px;
  color: #000;
}
.t2 {
  margin-top: 73px;
}
.net-body hr {
  width: 100%;
  height: 1px;
  margin: 61px 0 0;
  border: 0;
  background: #808080;
}

/* browser */
.ie-nav {
  height: 28px;
  flex: none;
  margin-top: 3px;
  padding: 0 6px 0 2px;
  display: flex;
  align-items: center;
}
.recent {
  width: 10px;
  margin: 0 5px 0 4px;
}
.field {
  height: 22px;
  background: #fff;
  border: 1px solid;
  border-color: #808080 #fff #fff #808080;
  box-shadow: inset 1px 1px #404040;
  display: flex;
  align-items: center;
  font: 10px/16px "Liberation Mono", monospace;
}
.address {
  flex: 1;
  padding: 1px 1px 0 2px;
}
.address input {
  flex: 1;
  margin-left: 4px;
  color: transparent;
  background: linear-gradient(90deg, #808080 78px, #000 78px 126px, #808080 126px);
  -webkit-background-clip: text;
  background-clip: text;
}
.address button {
  width: 16px;
  height: 17px;
  background: #d4d0c8;
  border: 1px solid;
  border-color: #fff #404040 #404040 #fff;
  box-shadow: inset -1px -1px #808080;
}
.sq {
  width: 22px;
  height: 22px;
  margin-left: 4px;
  border: 1px solid #a9afba;
  border-radius: 3px;
  background: linear-gradient(#f4f5f8, #d9dde8 50%, #eceef4);
}
.address + .sq {
  margin-left: 5px;
}
.bing {
  width: 254px;
  margin: 0 5px 0 6px;
  padding-left: 3px;
}
.bing input {
  flex: 1;
  margin-left: 2px;
  background: none;
}
.bing input::placeholder {
  color: #808080;
  opacity: 1;
}
.split {
  height: 22px;
  display: flex;
  border: 1px solid #a9afba;
  border-radius: 3px;
  background: linear-gradient(#f4f5f8, #d9dde8 50%, #eceef4);
}
.split button {
  width: 20px;
}
.split button + button {
  width: 13px;
  border-left: 1px solid #a9afba;
}
.favs {
  height: 34px;
  flex: none;
  padding: 1px 0 0 5px;
  display: flex;
  align-items: center;
}
.favbtn {
  gap: 3px;
}
.favs i {
  width: 2px;
  height: 20px;
  margin: 0 5px 0 12px;
  border-left: 1px solid #808080;
  border-right: 1px solid #fff;
}
.site {
  margin-left: 7px;
  gap: 4px;
  color: #808080;
}
.site + .site {
  margin-left: 11px;
}
.ie-tabs {
  height: 25px;
  flex: none;
  display: flex;
  padding-left: 5px;
}
.ie-tab {
  width: 298px;
  padding-left: 4px;
  gap: 2px;
  justify-content: flex-start;
  background: linear-gradient(#fff, #d4d0c8);
  border-right: 1px solid #404040;
}
.new-tab {
  width: 29px;
  margin: 1px 0 0 2px;
  border: 1px solid;
  border-color: #fff #404040 transparent #fff;
}
.commands {
  flex: 1;
  display: flex;
  align-items: center;
  justify-content: flex-end;
  padding: 0 12px 2px 0;
}
.home {
  gap: 7px;
  margin-right: 8px;
}
.feeds {
  gap: 9px;
  margin-right: 9px;
}
.mail {
  margin-right: 8px;
}
.print {
  gap: 7px;
  margin-right: 11px;
}
.word {
  gap: 5px;
  margin-right: 12px;
}
.word:nth-last-child(2) {
  margin-right: 9px;
}
.helpbtn {
  gap: 2px;
}
.view {
  flex: 1;
  margin-right: 2px;
  background: #fff;
  border-left: 1px solid #808080;
  border-top: 1px solid #808080;
  box-shadow: inset 1px 1px #404040;
  display: flex;
  justify-content: space-between;
}
.view p {
  padding: 18px 0 0 10px;
  font: 13px/16px "Liberation Mono", monospace;
}
.scroll {
  width: 16px;
  margin-top: 1px;
  background: repeating-conic-gradient(#fff 0 25%, #d4d0c8 0 50%) 0 0 / 2px 2px;
}
.scroll button {
  width: 16px;
  height: 16px;
  background: #d4d0c8;
  border: 1px solid;
  border-color: #fff #404040 #404040 #fff;
  box-shadow: inset -1px -1px #808080;
}
.mark {
  position: absolute;
  right: 16px;
  bottom: 6px;
  font-size: 10px;
  color: #a4a4a4;
  text-shadow: 1px 1px #5a5a5a;
}
</style>
